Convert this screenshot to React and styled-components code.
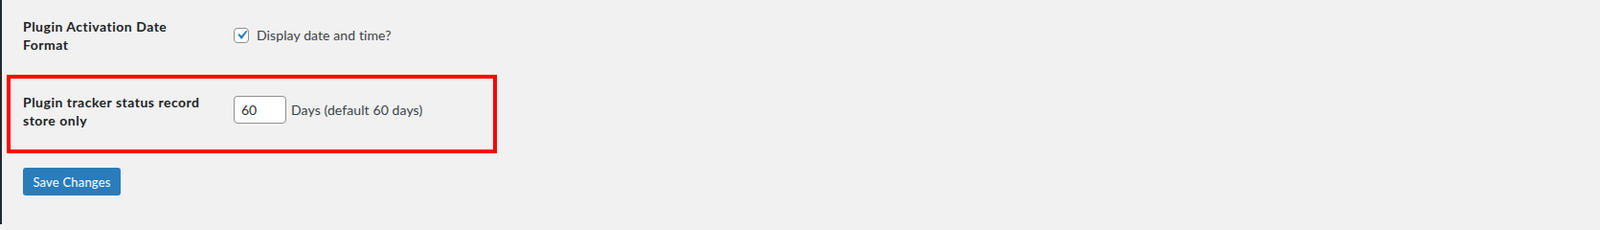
import React from 'react';
import styled, { createGlobalStyle } from 'styled-components';

const GlobalStyle = createGlobalStyle`
  html, body {
    margin: 0;
    padding: 0;
    background: #f1f1f1;
  }
  body {
    font-family: Lato, "Liberation Sans", sans-serif;
    font-size: 14px;
    color: #3c434a;
  }
`;

const App = () => (
  <>
    <GlobalStyle />
    <Page>
      <Form>
        <Row>
          <Label>Plugin Activation Date Format</Label>
          <Field $top={11}>
            <CheckLabel>
              <Checkbox>
                <svg viewBox="0 0 20 20">
                  <path
                    d="M14.83 4.89l1.34.94-5.81 8.38H9.02L5.78 9.67l1.34-1.25 2.57 2.4z"
                    fill="#2c7fc4"
                  />
                </svg>
              </Checkbox>
              Display date and time?
            </CheckLabel>
          </Field>
        </Row>
        <Highlight>
          <Row $top={15}>
            <Label>Plugin tracker status record store only</Label>
            <Field $top={3}>
              <NumberInput type="text" defaultValue="60" />
              <Hint>Days (default 60 days)</Hint>
            </Field>
          </Row>
        </Highlight>
        <Actions>
          <SaveButton type="button">Save Changes</SaveButton>
        </Actions>
      </Form>
    </Page>
  </>
);

export default App;

const Page = styled.div`
  min-height: 234px;
  border-left: 2px solid #23282d;
  box-sizing: border-box;
  padding-left: 5px;
`;

const Form = styled.div`
  display: flex;
  flex-direction: column;
  width: 512px;
`;

const Row = styled.div`
  display: grid;
  grid-template-columns: 220px 1fr;
  align-items: start;
  padding: ${(p) => p.$top || 18}px 0 0 17px;
`;

const Highlight = styled.div`
  margin-top: 22px;
  border: 4px solid #ff0000;
  padding-bottom: 21px;

  ${Row} {
    padding-left: 13px;
  }
`;

const Label = styled.div`
  font-weight: 700;
  letter-spacing: 0.5px;
  color: #1d2327;
  line-height: 19px;
  width: 190px;
`;

const Field = styled.div`
  display: flex;
  align-items: center;
  padding-top: ${(p) => p.$top}px;
`;

const CheckLabel = styled.label`
  display: flex;
  align-items: center;
  gap: 8px;
  line-height: 16px;
  color: #3c434a;
  letter-spacing: 0.1px;
`;

const Checkbox = styled.span`
  width: 16px;
  height: 16px;
  box-sizing: border-box;
  border: 1px solid #8c8f94;
  border-radius: 4px;
  background: #fff;
  display: flex;
  align-items: center;
  justify-content: center;
  svg {
    display: block;
    width: 19px;
    height: 19px;
    margin: -1px -2px 0 -1px;
    flex-shrink: 0;
  }
`;

const NumberInput = styled.input`
  width: 55px;
  height: 29px;
  box-sizing: border-box;
  border: 1px solid #8c8f94;
  border-radius: 4px;
  background: #fff;
  padding: 0 7px;
  font-family: inherit;
  font-size: 14px;
  color: #2c3338;
  outline: none;
`;

const Hint = styled.span`
  margin-left: 5px;
  line-height: 19px;
  letter-spacing: 0.1px;
`;

const Actions = styled.div`
  padding: 15px 0 0 17px;
`;

const SaveButton = styled.button`
  width: 102px;
  height: 29px;
  border: none;
  border-radius: 3px;
  background: #2a7cba;
  color: #fff;
  font-family: inherit;
  font-size: 13px;
  letter-spacing: 0.2px;
  cursor: pointer;
  padding: 0;
`;
